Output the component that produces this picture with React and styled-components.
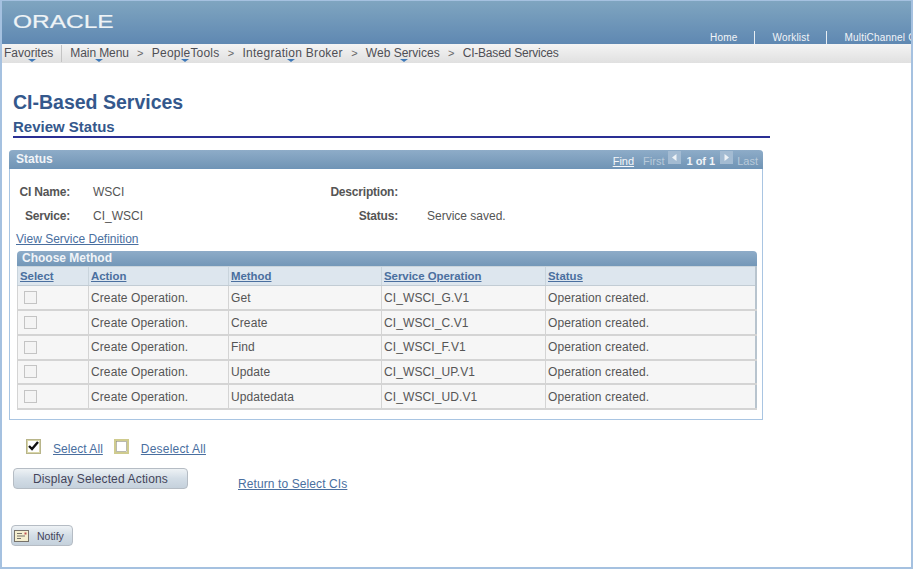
import React from 'react';
import styled, { createGlobalStyle } from 'styled-components';

const Global = createGlobalStyle`
  html, body { margin: 0; padding: 0; background: #fff; }
  body { font-family: "Liberation Sans", Arial, sans-serif; font-size: 12px; color: #555; }
  a { color: #4a6f9f; text-decoration: underline; }
`;

const Frame = styled.div`
  box-sizing: border-box;
  width: 913px;
  height: 569px;
  border: 2px solid #a5c1e0;
  border-top-width: 1px;
  overflow: hidden;
  display: flex;
  flex-direction: column;
`;
const Banner = styled.header`
  height: 43px;
  flex: none;
  background: linear-gradient(#7fa5c0, #5f88b2);
  display: flex;
  justify-content: space-between;
  align-items: flex-end;
  overflow: hidden;
`;
const Logo = styled.span`
  display: block;
  margin: 0 0 13px 11px;
  color: #eef3f6;
  font-size: 18px;
  line-height: 18px;
  transform: scaleX(1.36);
  transform-origin: left center;
  -webkit-text-stroke: 0.2px #eef3f6;
`;
const UtilityLinks = styled.nav`
  display: flex;
  width: 201px;
  flex: none;
  white-space: nowrap;
  color: #f2f5f8;
  font-size: 10px;
  letter-spacing: 0.2px;
  line-height: 13px;
  overflow: hidden;
`;
const Utility = styled.span`
  flex: none;
  border-right: ${p => (p.$last ? 'none' : '1px solid #e8eef3')};
  padding-right: ${p => (p.$last ? '0' : '17px')};
  padding-left: ${p => (p.$first ? '0' : '17px')};
`;
const Crumbs = styled.nav`
  height: 19px;
  flex: none;
  background: linear-gradient(#f4f4f4, #e0e0e0);
  display: flex;
  align-items: flex-start;
  padding: 1px 0 0 2px;
  box-sizing: border-box;
  font-size: 12px;
  line-height: 17px;
  color: #4f4f55;
  white-space: nowrap;
`;
const Crumb = styled.span`
  position: relative;
  flex: none;
  letter-spacing: ${p => p.$track || 0}px;
  &::after {
    content: ${p => (p.$menu ? '""' : 'none')};
    position: absolute;
    left: ${p => p.$menu}px;
    top: 14px;
    border: 4px solid transparent;
    border-top: 3px solid #3d78b8;
    border-bottom: none;
  }
`;
const CrumbDivider = styled.span`
  flex: none;
  width: 1px;
  height: 17px;
  margin: 0 8px;
  background: #c4c4c4;
`;
const Chevron = styled.span`
  flex: none;
  width: 23px;
  text-align: center;
  font-size: 11px;
  color: #666;
`;
const Content = styled.main`
  flex: 1;
  padding: 28px 0 0 7px;
  display: flex;
  flex-direction: column;
  align-items: flex-start;
`;
const Title = styled.h1`
  margin: 0 0 0 4px;
  font-size: 19.5px;
  line-height: 22px;
  font-weight: bold;
  color: #34588c;
`;
const SubTitle = styled.h2`
  box-sizing: border-box;
  width: 757px;
  margin: 4px 0 0 4px;
  height: 21px;
  border-bottom: 2px solid #2a2f94;
  font-size: 15px;
  line-height: 19px;
  font-weight: bold;
  color: #34588c;
`;
const Panel = styled.section`
  box-sizing: border-box;
  width: 754px;
  height: 270px;
  margin-top: 12px;
  border: 1px solid #a9c5e2;
  border-top: none;
  border-radius: 4px 4px 0 0;
`;
const PanelHead = styled.div`
  height: 19px;
  margin: 0 -1px;
  border-radius: 4px 4px 0 0;
  background: linear-gradient(#8eacc8, #7195b6);
  border-bottom: 1px solid #6e94b8;
  box-sizing: border-box;
  display: flex;
  justify-content: space-between;
  align-items: center;
  padding: 0 5px 0 7px;
  color: #f1f4f8;
  font-size: 12px;
  font-weight: bold;
`;
const Pager = styled.div`
  display: flex;
  align-items: center;
  font-size: 11px;
  font-weight: normal;
  color: #b9cada;
  gap: 4px;
  padding-top: 4px;
`;
const FindLink = styled.a`
  color: #f4f7fa;
  margin-right: 5px;
`;
const PagerArrow = styled.svg`
  width: 13px;
  height: 13px;
  margin: -7px 0 0 0;
  display: block;
`;
const PagerCount = styled.b`
  color: #f1f4f8;
  margin: 0 1px;
`;
const Fields = styled.div`
  display: grid;
  grid-template-columns: 60px 83px 171px 74px 1fr;
  grid-auto-rows: 24px;
  margin: 11px 0 0 0;
  align-items: center;
  width: 640px;
`;
const Label = styled.span`
  text-align: right;
  font-weight: bold;
  letter-spacing: -0.2px;
  color: #555;
  grid-column: ${p => p.$col};
  white-space: nowrap;
`;
const Value = styled.span`
  padding-left: ${p => p.$pad}px;
  grid-column: ${p => p.$col};
  color: #555;
  white-space: nowrap;
`;
const ViewLink = styled.a`
  display: block;
  margin: 3px 0 0 6px;
  line-height: 16px;
`;
const Grid = styled.div`
  box-sizing: border-box;
  width: 740px;
  margin: 4px 0 0 7px;
  border-radius: 4px 4px 0 0;
`;
const GridTitle = styled.div`
  height: 15px;
  padding-left: 5px;
  border-radius: 4px 4px 0 0;
  background: linear-gradient(#8eacc8, #7397b8);
  color: #f1f4f8;
  font-size: 12px;
  line-height: 15px;
  font-weight: bold;
`;
const Table = styled.table`
  border-collapse: collapse;
  table-layout: fixed;
  width: 740px;
  border: 1px solid #bcc8d2;
  border-bottom: 2px solid #b8c4ce;
  border-right: 2px solid #b8c4ce;
`;
const Th = styled.th`
  height: 19px;
  padding: 0 2px;
  text-align: left;
  font-size: 11.4px;
  background: #dde6ee;
  border: 1px solid #c9d4dc;
  border-bottom: 1px solid #c2ccd4;
  box-sizing: border-box;
`;
const Td = styled.td`
  height: 24.7px;
  padding: 0 2px;
  background: #f6f6f6;
  border: 1px solid #d4d4d4;
  border-bottom-width: 2px;
  color: #555;
  font-size: 12px;
  letter-spacing: 0.1px;
  line-height: 14px;
  white-space: nowrap;
  box-sizing: border-box;
`;
const SelectBox = styled.span`
  display: block;
  box-sizing: border-box;
  width: 13px;
  height: 13px;
  margin-left: 4px;
  border: 1px solid #c4c4c4;
  background: #f4f4f4;
`;
const Toggles = styled.div`
  display: flex;
  align-items: flex-start;
  margin: 19px 0 0 17px;
`;
const ToggleIcon = styled.svg`
  width: 15px;
  height: 15px;
  display: block;
  flex: none;
`;
const ToggleLink = styled.a`
  margin: 2px ${p => p.$after}px 0 ${p => p.$before}px;
  line-height: 16px;
  letter-spacing: ${p => p.$track}px;
`;
const ActionRow = styled.div`
  display: flex;
  align-items: flex-start;
  margin: 11px 0 0 4px;
`;
const PushButton = styled.button`
  box-sizing: border-box;
  height: 21px;
  padding: 0;
  border: 1px solid #b5bcc4;
  border-radius: 4px;
  background: linear-gradient(#eef2f5 0%, #d3dde6 50%, #c5d1dc 100%);
  color: #44445a;
  font-family: inherit;
  font-size: 12px;
  display: flex;
  align-items: center;
  justify-content: center;
`;
const WideButton = styled(PushButton)`
  width: 175px;
  letter-spacing: 0.15px;
`;
const ReturnLink = styled.a`
  margin: 8px 0 0 50px;
  line-height: 16px;
  letter-spacing: 0.1px;
`;
const NotifyButton = styled(PushButton)`
  width: 62px;
  margin: 33px 0 0 2px;
  padding-left: 2px;
  justify-content: flex-start;
  font-size: 10.5px;
  gap: 8px;
`;
const NotifyIcon = styled.svg`
  width: 15px;
  height: 12px;
  display: block;
`;

const rows = [
  ['Get', 'CI_WSCI_G.V1'],
  ['Create', 'CI_WSCI_C.V1'],
  ['Find', 'CI_WSCI_F.V1'],
  ['Update', 'CI_WSCI_UP.V1'],
  ['Updatedata', 'CI_WSCI_UD.V1'],
];

const Arrow = ({ left }) => (
  <PagerArrow viewBox="0 0 13 13">
    <rect width="13" height="13" fill="#a3bbd2" />
    <path d={left ? 'M8.5 3v7L4 6.5z' : 'M4.5 3v7L9 6.5z'} fill="#edf2f6" />
  </PagerArrow>
);

export default function App() {
  return (
    <Frame>
      <Global />
      <Banner>
        <Logo>ORACLE</Logo>
        <UtilityLinks>
          <Utility $first>Home</Utility>
          <Utility>Worklist</Utility>
          <Utility $last>MultiChannel Console</Utility>
        </UtilityLinks>
      </Banner>
      <Crumbs>
        <Crumb $menu={24}>Favorites</Crumb>
        <CrumbDivider />
        <Crumb $menu={25} $track={-0.1}>Main Menu</Crumb>
        <Chevron>&gt;</Chevron>
        <Crumb $menu={29} $track={0.2}>PeopleTools</Crumb>
        <Chevron>&gt;</Chevron>
        <Crumb $menu={45} $track={0.28}>Integration Broker</Crumb>
        <Chevron>&gt;</Chevron>
        <Crumb $menu={34}>Web Services</Crumb>
        <Chevron>&gt;</Chevron>
        <Crumb $track={-0.2}>CI-Based Services</Crumb>
      </Crumbs>
      <Content>
        <Title>CI-Based Services</Title>
        <SubTitle>Review Status</SubTitle>
        <Panel>
          <PanelHead>
            <span>Status</span>
            <Pager>
              <FindLink>Find</FindLink>
              <span>First</span>
              <Arrow left />
              <PagerCount>1 of 1</PagerCount>
              <Arrow />
              <span>Last</span>
            </Pager>
          </PanelHead>
          <Fields>
            <Label $col={1}>CI Name:</Label>
            <Value $col={2} $pad={23}>WSCI</Value>
            <Label $col={4}>Description:</Label>
            <Label $col={1}>Service:</Label>
            <Value $col={2} $pad={23}>CI_WSCI</Value>
            <Label $col={4}>Status:</Label>
            <Value $col={5} $pad={29}>Service saved.</Value>
          </Fields>
          <ViewLink>View Service Definition</ViewLink>
          <Grid>
            <GridTitle>Choose Method</GridTitle>
            <Table>
              <colgroup>
                <col width="71" />
                <col width="140" />
                <col width="153" />
                <col width="164" />
                <col />
              </colgroup>
              <thead>
                <tr>
                  {['Select', 'Action', 'Method', 'Service Operation', 'Status'].map(h => (
                    <Th key={h}><a>{h}</a></Th>
                  ))}
                </tr>
              </thead>
              <tbody>
                {rows.map(([method, op]) => (
                  <tr key={op}>
                    <Td><SelectBox /></Td>
                    <Td>Create Operation.</Td>
                    <Td>{method}</Td>
                    <Td>{op}</Td>
                    <Td>Operation created.</Td>
                  </tr>
                ))}
              </tbody>
            </Table>
          </Grid>
        </Panel>
        <Toggles>
          <ToggleIcon viewBox="0 0 15 15">
            <rect x=".5" y=".5" width="14" height="14" fill="#d9d6a8" stroke="#b8b58a" />
            <rect x="2" y="2" width="11" height="11" fill="#fff" />
            <path d="M3 7l3 3 6-7" fill="none" stroke="#111" strokeWidth="2.4" />
          </ToggleIcon>
          <ToggleLink $before={12} $after={11} $track={0.05}>Select All</ToggleLink>
          <ToggleIcon viewBox="0 0 15 15">
            <rect x="1" y="1" width="13" height="13" fill="#fff" stroke="#cfcb8e" strokeWidth="2" />
            <rect x="2.5" y="2.5" width="10" height="10" fill="none" stroke="#8a8a78" strokeWidth=".6" />
          </ToggleIcon>
          <ToggleLink $before={12} $after={0} $track={0.2}>Deselect All</ToggleLink>
        </Toggles>
        <ActionRow>
          <WideButton>Display Selected Actions</WideButton>
          <ReturnLink>Return to Select CIs</ReturnLink>
        </ActionRow>
        <NotifyButton>
          <NotifyIcon viewBox="0 0 15 12">
            <rect x=".5" y=".5" width="14" height="11" fill="#f5efcf" stroke="#77726a" />
            <path d="M3 3.5h5M3 6h8M3 8.5h4" stroke="#77726a" />
            <rect x="10.5" y="2.5" width="2" height="2" fill="#c05050" />
          </NotifyIcon>
          <span>Notify</span>
        </NotifyButton>
      </Content>
    </Frame>
  );
}
